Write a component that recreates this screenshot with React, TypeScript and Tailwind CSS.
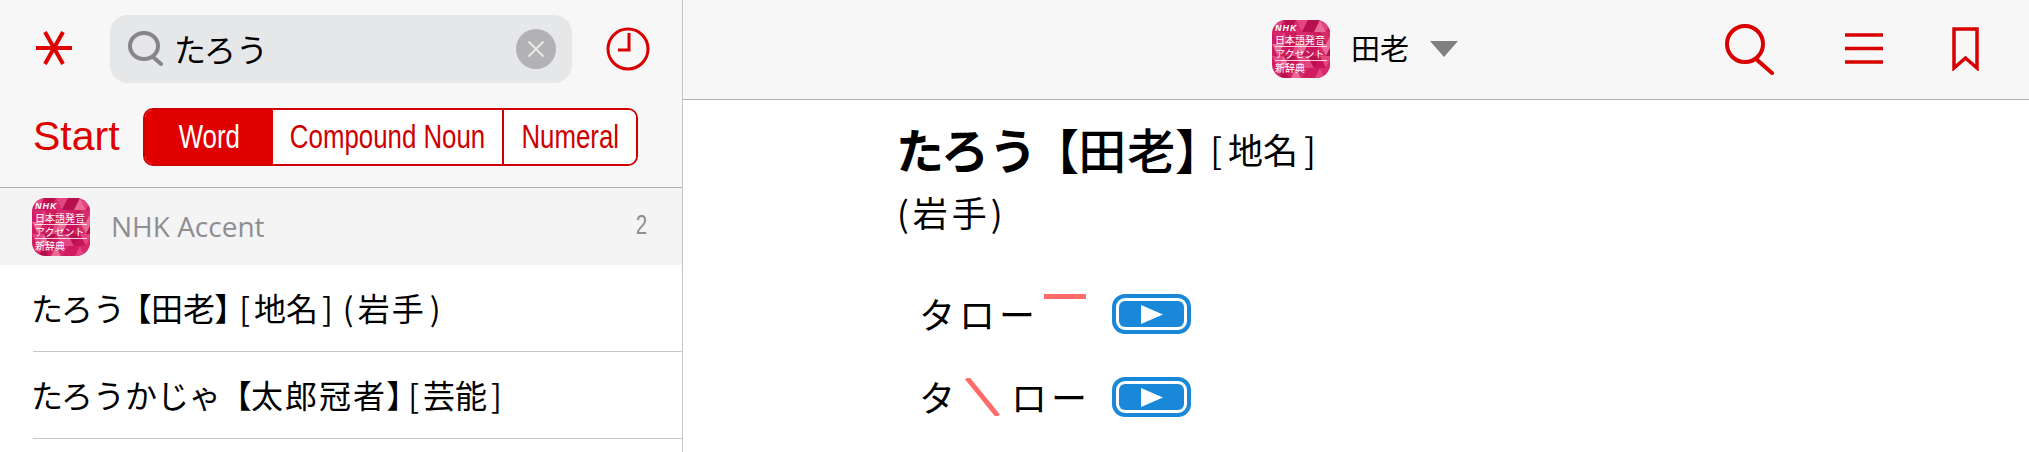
const cjk = "font-['Noto_Sans_CJK_JP','Noto_Sans',sans-serif]";
const narrow = "inline-block scale-x-[0.76] whitespace-nowrap";
const palt = "[font-feature-settings:'palt']";
const shades = ["#e2457f", "#c9145a", "#d62a6c", "#b80f4e", "#ea6a96", "#d01c60"];

function NhkIcon({ className }: { className: string }) {
  const tris = [];
  for (let r = 0; r < 5; r++) {
    for (let c = 0; c < 5; c++) {
      const x = c * 12;
      const y = r * 12;
      tris.push(<path key={`a${r}${c}`} d={`M${x} ${y} h12 l-6 12 Z`} fill={shades[(r * 2 + c * 3) % 6]} />);
      tris.push(<path key={`b${r}${c}`} d={`M${x + 12} ${y} l6 12 h-12 Z`} fill={shades[(r * 5 + c + 1) % 6]} />);
    }
  }
  return (
    <div className={`relative overflow-hidden rounded-[24%] bg-[#d01c60] ${className}`}>
      <svg viewBox="0 0 58 58" className="absolute inset-0 h-full w-full">
        {tris}
      </svg>
      <div className="relative flex h-full flex-col px-[3px] pt-[4px] font-['Noto_Sans_CJK_JP',sans-serif] leading-none text-white">
        <span className="font-['Liberation_Sans',sans-serif] text-[9px] font-bold italic leading-[9px] tracking-[1px]">NHK</span>
        <span className="whitespace-nowrap text-[10px] leading-[13px]">日本語発音</span>
        <span className="whitespace-nowrap border-y border-white/80 text-[10px] leading-[13px]">アクセント</span>
        <span className="whitespace-nowrap text-[10px] leading-[14px]">新辞典</span>
      </div>
    </div>
  );
}

function PlayButton() {
  return (
    <div className="flex h-[40px] w-[79px] items-center justify-center rounded-[13px] border-4 border-[#1a88d9] bg-white p-[3px]">
      <div className="flex h-full w-full items-center justify-center rounded-[6px] bg-[#1a88d9]">
        <svg width="22" height="19" viewBox="0 0 22 19">
          <path d="M0 0 L22 9.5 L0 19 Z" fill="#fff" />
        </svg>
      </div>
    </div>
  );
}

export default function App() {
  return (
    <div className={`flex h-[452px] w-[2029px] overflow-hidden bg-white text-black ${cjk}`}>
      <aside className="w-[683px] shrink-0 border-r border-[#c4c4c4]">
        <div className="h-[188px] border-b border-[#b2b2b2] bg-[#f7f7f7] pt-[15px]">
          <div className="flex h-[68px] items-center pl-[35px]">
            <svg width="38" height="34" viewBox="0 0 38 34" fill="none" stroke="#e00000" strokeWidth="4" className="mb-[2px] mr-[37px]">
              <path d="M1 17 H37 M10 1 L28 33 M28 1 L10 33" />
            </svg>
            <div className="flex h-[68px] w-[462px] items-center rounded-[18px] bg-[#e6e7e9] pl-[18px] pr-[16px]">
              <svg width="36" height="35" viewBox="0 0 36 35" fill="none" stroke="#86868a" strokeWidth="4" strokeLinecap="round" className="mb-[2px]">
                <ellipse cx="16" cy="15" rx="14" ry="13" />
                <path d="M25 26 L33 33" />
              </svg>
              <span className="mb-[2px] ml-[10px] flex-1 text-[32px] leading-none">たろう</span>
              <div className="flex h-[40px] w-[40px] items-center justify-center rounded-full bg-[#b2b2b4]">
                <svg width="20" height="20" viewBox="0 0 20 20" stroke="#e8e8ea" strokeWidth="2" strokeLinecap="round">
                  <path d="M3 3 L17 17 M17 3 L3 17" />
                </svg>
              </div>
            </div>
            <svg width="44" height="44" viewBox="0 0 44 44" fill="none" stroke="#d80000" strokeWidth="3" className="ml-[34px]">
              <circle cx="22" cy="22" r="20" />
              <path d="M23 6 V23 H12" />
            </svg>
          </div>
          <div className="mt-[25px] flex h-[58px] items-center pl-[33px]">
            <span className="mb-[2px] w-[110px] font-['Liberation_Sans',sans-serif] text-[41px] leading-none text-[#dc0000]">Start</span>
            <div className="flex h-[58px] w-[495px] overflow-hidden rounded-[10px] border-2 border-[#d00000] font-['Liberation_Sans',sans-serif] text-[34px] leading-none text-[#cc0000]">
              <div className="flex w-[128px] items-center justify-center bg-[#e00000] pb-[3px] text-white"><span className={narrow}>Word</span></div>
              <div className="flex w-[231px] items-center justify-center border-r-2 border-[#cc0000] bg-white pb-[3px]"><span className={narrow}>Compound Noun</span></div>
              <div className="flex flex-1 items-center justify-center bg-white pb-[3px]"><span className={narrow}>Numeral</span></div>
            </div>
          </div>
        </div>
        <div className="flex h-[77px] items-center bg-[#f4f4f4] pl-[32px] pr-[33px]">
          <NhkIcon className="h-[58px] w-[58px]" />
          <span className="mb-[2px] ml-[21px] flex-1 font-['Open_Sans',sans-serif] text-[28px] leading-none text-[#8e8e93]">NHK Accent</span>
          <span className={`${narrow} mb-[2px] font-['Liberation_Sans',sans-serif] text-[27px] leading-none text-[#8e8e93]`}>2</span>
        </div>
        <div className="ml-[33px]">
          <div className="flex h-[87px] items-center border-b border-[#c8c8c8] pb-[3px] text-[32px] leading-none">
            <span className="-ml-[2px] whitespace-nowrap">
              たろう<span className={`ml-[10px] ${palt}`}>【</span>田老<span className={palt}>】</span><span className="ml-[8px]">[</span><span className="mx-[4px]">地名</span>]<span className="ml-[10px]">(</span><span className="mx-[4px] tracking-[2px]">岩手</span>)
            </span>
          </div>
          <div className="flex h-[87px] items-center border-b border-[#c8c8c8] pb-[3px] text-[32px] leading-none">
            <span className="-ml-[2px] whitespace-nowrap">
              たろうかじゃ<span className={`ml-[14px] ${palt}`}>【</span><span className="tracking-[2px]">太郎冠者</span><span className={palt}>】</span><span className="ml-[5px]">[</span><span className="mx-[4px]">芸能</span>]
            </span>
          </div>
        </div>
      </aside>
      <main className="flex-1">
        <header className="flex h-[100px] items-center border-b border-[#b2b2b2] bg-[#f7f7f7] pb-[2px] pl-[589px]">
          <NhkIcon className="h-[58px] w-[58px]" />
          <span className="mb-[3px] ml-[21px] text-[29px] leading-none">田老</span>
          <svg width="28" height="16" viewBox="0 0 28 16" className="ml-[21px]">
            <path d="M0 0 H28 L14 16 Z" fill="#808080" />
          </svg>
          <svg width="50" height="52" viewBox="0 0 50 52" fill="none" stroke="#d80000" strokeWidth="4" strokeLinecap="round" className="ml-[267px]">
            <circle cx="20" cy="21" r="18" />
            <path d="M31 36 L47 50" />
          </svg>
          <svg width="38" height="31" viewBox="0 0 38 31" stroke="#d80000" strokeWidth="3.5" className="ml-[70px]">
            <path d="M0 2 H38 M0 15.5 H38 M0 29 H38" />
          </svg>
          <svg width="27" height="44" viewBox="0 0 27 44" fill="none" stroke="#d80000" strokeWidth="3.5" className="ml-[69px]">
            <path d="M2 2 H25 V41 L13.5 31 L2 41 Z" />
          </svg>
        </header>
        <div className="pl-[213px] pt-[20px]">
          <div className="flex h-[56px] items-center whitespace-nowrap">
            <span className="text-[48px] font-bold leading-none">たろう</span>
            <span className={`ml-[17px] text-[48px] font-medium leading-none ${palt}`}>【</span>
            <span className="text-[48px] font-medium leading-none tracking-[1px]">田老</span>
            <span className={`text-[48px] font-medium leading-none ${palt}`}>】</span>
            <span className="ml-[10px] text-[35px] leading-none">[<span className="mx-[6px]">地名</span>]</span>
          </div>
          <div className="mt-[15px] flex h-[40px] items-center pl-[1px] text-[35px] leading-none tracking-[4px]">(岩手)</div>
          <div className="mt-[63px] flex h-[40px] items-center pl-[23px]">
            <span className="mb-[3px] w-[125px] whitespace-nowrap text-[36px] leading-none tracking-[4px]">タロー</span>
            <span className="mb-[35px] h-[5px] w-[42px] bg-[#ff6b6b]"></span>
            <div className="ml-[26px]"><PlayButton /></div>
          </div>
          <div className="mt-[43px] flex h-[40px] items-center pl-[23px]">
            <span className="mb-[3px] w-[46px] text-[36px] leading-none">タ</span>
            <svg width="35" height="38" viewBox="0 0 35 38" fill="none" stroke="#ff6b6b" strokeWidth="5">
              <path d="M2 0 L33 38" />
            </svg>
            <span className="mb-[3px] ml-[11px] w-[80px] whitespace-nowrap text-[36px] leading-none tracking-[4px]">ロー</span>
            <div className="ml-[21px]"><PlayButton /></div>
          </div>
        </div>
      </main>
    </div>
  );
}
